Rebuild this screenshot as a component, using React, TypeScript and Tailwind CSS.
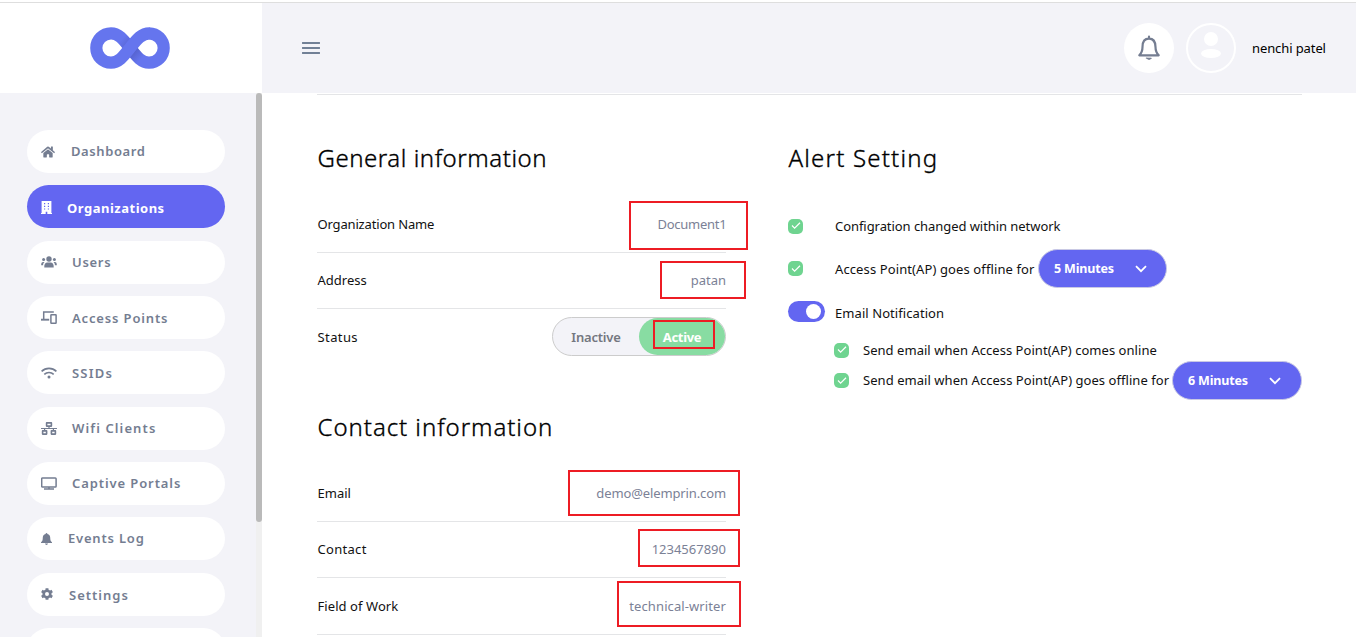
import React from "react";
import { FaHome, FaNetworkWired } from "react-icons/fa";

type IconType = React.ComponentType<{ className?: string }>;

function Monitor({ className }: { className?: string }) {
  return (
    <svg viewBox="0 0 16 13" fill="none" stroke="currentColor" strokeWidth="1.5" className={className}>
      <rect x="0.7" y="0.9" width="14.4" height="9.2" rx="0.8" />
      <path d="M3 12.1h10M8 10v2" />
    </svg>
  );
}

function Building({ className }: { className?: string }) {
  return (
    <svg viewBox="0 0 11 13" fill="currentColor" className={className}>
      <path fillRule="evenodd" d="M.6 0h9.800v12H11v1H6.300v-2.300H4.700V13H0v-1h.6zM3 2v1.200h1.200V2zM6.800 2v1.200H8V2zM3 4.700v1.200h1.200V4.700zM6.800 4.700v1.200H8V4.700zM3 7.400v1.200h1.200V7.400zM6.800 7.400v1.200H8V7.400z" />
    </svg>
  );
}

function People({ className }: { className?: string }) {
  return (
    <svg viewBox="0 0 16 12" fill="currentColor" className={className}>
      <circle cx="8" cy="3" r="2.700" />
      <circle cx="2.600" cy="3.600" r="1.500" />
      <circle cx="13.400" cy="3.600" r="1.500" />
      <path d="M3.300 11.500c-.3-3.100 1.200-4.900 3-4.900h3.400c1.800 0 3.300 1.800 3 4.900zM.2 9.300C0 7 .8 5.900 2.200 5.900h1.300C2.500 6.800 2 8 2.100 9.300zM15.800 9.300c.2-2.300-.6-3.400-2-3.400h-1.300c1 .9 1.500 2.100 1.400 3.400z" />
    </svg>
  );
}

function Devices({ className }: { className?: string }) {
  return (
    <svg viewBox="0 0 16 13" fill="none" stroke="currentColor" strokeWidth="1.500" className={className}>
      <path d="M12.800 1H2.700v7.400" />
      <path d="M0 8.700h8.200" strokeWidth="1.900" />
      <rect x="9.900" y="3.700" width="5.200" height="8.500" rx=".5" />
    </svg>
  );
}

function Wifi({ className }: { className?: string }) {
  return (
    <svg viewBox="0 0 16 12" fill="none" stroke="currentColor" strokeWidth="1.600" className={className}>
      <path d="M.6 4.400c4.200-4 10.600-4 14.800 0M3.300 7.300c2.700-2.500 6.700-2.500 9.400 0" />
      <circle cx="8" cy="10" r="1.500" fill="currentColor" stroke="none" />
    </svg>
  );
}

function SolidBell({ className }: { className?: string }) {
  return (
    <svg viewBox="0 0 11 12" fill="currentColor" className={className}>
      <path d="M5.500 0c.6 0 .9.400.9.900C8.300 1.300 9.200 2.800 9.200 4.600c0 2.900.6 3.900 1.800 4.700v.7H0v-.7c1.200-.8 1.800-1.800 1.800-4.700 0-1.800.9-3.300 2.800-3.700 0-.5.300-.9.900-.9zM4 10.600h3c-.2 1.700-2.800 1.700-3 0z" />
    </svg>
  );
}

function Gear({ className }: { className?: string }) {
  return (
    <svg viewBox="0 0 12 12" fill="none" stroke="currentColor" className={className}>
      <circle cx="6" cy="6" r="3.300" strokeWidth="2.600" />
      <path d="M6 .2v2.300M6 9.500v2.300M.8 3l2.200 1.250M9 7.750L11.200 9M.8 9L3 7.750M9 4.250L11.200 3" strokeWidth="2.900" />
    </svg>
  );
}

function Nav({ icon: Icon, label, box, text, active }: { icon: IconType; label: string; box: string; text: string; active?: boolean }) {
  return (
    <div className={`flex h-[43px] w-[198px] shrink-0 items-center rounded-full pl-[14px] ${active ? "bg-[#6366f1] font-bold text-white" : "bg-white font-semibold text-[#747d91]"}`}>
      <Icon className={`shrink-0 ${box}`} />
      <span className={`whitespace-nowrap text-[13px] leading-5 ${text}`}>{label}</span>
    </div>
  );
}

function Logo() {
  return (
    <svg viewBox="0 0 80 42" className="h-[42px] w-[80px]" fill="none" stroke="#6575ee" strokeWidth="12.200">
      <defs>
        <linearGradient id="upper" gradientUnits="userSpaceOnUse" x1="32" y1="12" x2="38" y2="17">
          <stop offset="0" stopColor="#6575ee" />
          <stop offset="1" stopColor="#5b69d8" />
        </linearGradient>
        <linearGradient id="lower" gradientUnits="userSpaceOnUse" x1="50" y1="33" x2="43" y2="26">
          <stop offset="0" stopColor="#6575ee" />
          <stop offset="1" stopColor="#5663cf" />
        </linearGradient>
      </defs>
      <path d="M40 21C34 13.500 29 6.300 21 6.300" stroke="url(#upper)" />
      <path d="M40 21C46 28.500 51 35.700 59 35.700" stroke="url(#lower)" />
      <path d="M59 6.300A14.700 14.700 0 0 1 59 35.700M21 6.300A14.700 14.700 0 0 0 21 35.700C29 35.700 34 28.500 40 21C46 13.500 51 6.300 59.500 6.300" />
    </svg>
  );
}

function Heading({ children, className }: { children: string; className: string }) {
  return <h2 className={`pl-[0.5px] text-[24px] leading-[36px] font-light whitespace-nowrap text-black [-webkit-text-stroke:0.35px_black] ${className}`}>{children}</h2>;
}

function Row({ label, labelTrack, value, valueTrack, box, h }: { label: string; labelTrack: string; value: string; valueTrack: string; box: string; h: string }) {
  return (
    <div className={`relative flex items-center justify-between border-b border-[#e4e5e7] pl-[0.5px] text-[13px] ${h}`}>
      <span className={`text-[#111] ${labelTrack}`}>{label}</span>
      <span className={`text-[#7b8196] ${valueTrack}`}>{value}</span>
      <div className={`absolute border-2 border-[#ed1c24] ${box}`} />
    </div>
  );
}

function Check() {
  return (
    <span className="relative -top-px flex size-[15px] shrink-0 items-center justify-center rounded-[5px] bg-[#6fd490]">
      <svg viewBox="0 0 10 8" className="h-[8px] w-[10px]" fill="none" stroke="white" strokeWidth="1.200"><path d="M1 3.500l2.600 2.600L9 .8" /></svg>
    </span>
  );
}

function Select({ label, w }: { label: string; w: string }) {
  return (
    <div className={`relative -top-px flex h-[39px] shrink-0 items-center rounded-full border border-[#c9c9e4] bg-[#6366f1] pl-[15px] font-bold text-white ${w}`}>
      <span className="w-[81px] pt-px text-[12.500px] tracking-[-0.15px] whitespace-nowrap">{label}</span>
      <svg viewBox="0 0 12 8" className="h-[8px] w-[12px]" fill="none" stroke="white" strokeWidth="1.800"><path d="M1 1.200l5 5 5-5" /></svg>
    </div>
  );
}

export default function App() {
  return (
    <div className="flex h-[637px] w-[1356px] flex-col overflow-hidden bg-white font-['Noto_Sans','Open_Sans',sans-serif]">
      <div className="h-[3px] shrink-0 border-b border-[#dedede] bg-white" />
      <header className="flex h-[90px] shrink-0">
        <div className="flex w-[262px] shrink-0 justify-center pt-[24px] pr-[3px]"><Logo /></div>
        <div className="flex flex-1 items-center bg-[#f3f3f8] pl-10">
          <svg viewBox="0 0 18 12" className="h-[12px] w-[18px]" stroke="#718096" strokeWidth="1.900" strokeLinecap="round"><path d="M.5 1h17M.5 6h17M.5 11h17" /></svg>
          <div className="ml-[804px] flex size-[50px] items-center justify-center rounded-full bg-white">
            <svg viewBox="0 0 24 26" className="h-[26px] w-[24px]" fill="none" stroke="#747d91" strokeWidth="2.200" strokeLinejoin="round" strokeLinecap="round">
              <path d="M2.300 20.300h19.400c-2.300-2.300-3.200-4-3.200-8.300 0-5-2.300-8.300-6.500-8.300S5.500 7 5.500 12c0 4.300-.9 6-3.200 8.300zM12 1.700v2" /><path d="M9.700 23.200h4.600c-.4 1.500-4.200 1.500-4.600 0z" fill="#747d91" strokeWidth="1" />
            </svg>
          </div>
          <div className="ml-3 flex size-[50px] flex-col items-center rounded-full border-2 border-white pt-[7px]">
            <div className="size-[14px] rounded-full bg-white" />
            <div className="mt-[3px] h-[9px] w-[20px] rounded-[50%] bg-white" />
          </div>
          <span className="ml-[16px] pt-[2px] text-[13px] tracking-[-0.1px] whitespace-nowrap text-black">nenchi patel</span>
        </div>
      </header>
      <div className="flex min-h-0 flex-1">
        <aside className="flex w-[262px] shrink-0 bg-[#f3f3f8]">
          <nav className="flex w-[256px] flex-col gap-[12.350px] pt-[37px] pl-[27px]">
            <Nav icon={FaHome} label="Dashboard" box="size-[14px]" text="ml-[16px] pb-px tracking-[0.600px]" />
            <Nav icon={Building} label="Organizations" box="mt-px h-[13px] w-[11px]" text="ml-[15px] pt-[2px] tracking-[0.5px]" active />
            <Nav icon={People} label="Users" box="h-[12px] w-[16px]" text="ml-[15px] tracking-[0.700px]" />
            <Nav icon={Devices} label="Access Points" box="h-[13px] w-[16px]" text="ml-[15px] tracking-[0.85px]" />
            <Nav icon={Wifi} label="SSIDs" box="h-[12px] w-[16px]" text="ml-[15px] pt-px tracking-[1.2px]" />
            <Nav icon={FaNetworkWired} label="Wifi Clients" box="h-[13px] w-[16px]" text="ml-[15px] tracking-[1.1px]" />
            <Nav icon={Monitor} label="Captive Portals" box="h-[13px] w-[16px]" text="ml-[15px] pb-px tracking-[0.9px]" />
            <Nav icon={SolidBell} label="Events Log" box="h-[12px] w-[11px]" text="ml-[16px] pb-px tracking-[0.8px]" />
            <Nav icon={Gear} label="Settings" box="size-[12px]" text="ml-[16px] pt-px tracking-[1px]" />
            <Nav icon={Gear} label="" box="size-[12px]" text="ml-[16px]" />
          </nav>
          <div className="w-[6px] bg-[#f0f0f0]"><div className="h-[429px] w-[6px] rounded-full bg-[#bababa]" /></div>
        </aside>
        <main className="flex-1 pt-px pl-[55px]">
          <div className="w-[985px] border-t border-[#e4e5e7]" />
          <div className="flex">
            <section className="w-[409px]">
              <Heading className="mt-[45px] tracking-[0.540px]">General information</Heading>
              <div className="mt-[21px]">
                <Row label="Organization Name" labelTrack="tracking-[-0.16px]" value="Document1" valueTrack="-mr-[0.5px] tracking-[-0.25px]" h="h-[56px]" box="top-[4px] right-[-22px] h-[49px] w-[119px]" />
                <Row label="Address" labelTrack="" value="patan" valueTrack="" h="h-[56px]" box="top-[8px] right-[-20px] h-[38px] w-[86px]" />
                <div className="flex h-[56px] items-center justify-between pl-[0.5px] text-[13px]">
                  <span className="pt-px tracking-[0.4px] text-[#111]">Status</span>
                  <div className="relative -top-px flex h-[39px] w-[174px] rounded-full border border-[#ccc] bg-[#f3f3f8]">
                    <span className="flex w-[86px] items-center justify-center pt-[3px] font-semibold tracking-[-0.200px] text-[#747780]">Inactive</span>
                    <span className="relative flex flex-1 items-center justify-center rounded-full bg-[#88dca2] pt-[3px] font-bold tracking-[-0.300px] text-white">Active<i className="absolute top-[2px] left-[14px] h-[29px] w-[62px] border-2 border-[#ed1c24]" /></span>
                  </div>
                </div>
              </div>
              <Heading className="mt-[44px] tracking-[0.950px]">Contact information</Heading>
              <div className="mt-[21px]">
                <Row label="Email" labelTrack="" value="demo@elemprin.com" valueTrack="tracking-[-0.12px]" h="h-[56px]" box="top-[4px] right-[-14px] h-[46px] w-[172px]" />
                <Row label="Contact" labelTrack="tracking-[0.3px]" value="1234567890" valueTrack="" h="h-[56px]" box="top-[7px] right-[-14px] h-[38px] w-[102px]" />
                <Row label="Field of Work" labelTrack="pt-px tracking-[0.07px]" value="technical-writer" valueTrack="pt-px tracking-[0.1px]" h="h-[57px]" box="top-[3px] right-[-15px] h-[46px] w-[124px]" />
              </div>
            </section>
            <section className="ml-[62px] text-[13px] text-[#111]">
              <Heading className="mt-[45px] tracking-[1.200px]">Alert Setting</Heading>
              <div className="mt-[41px] flex h-[20px] items-center"><Check /><span className="ml-[32px] tracking-[-0.06px] whitespace-nowrap">Configration changed within network</span></div>
              <div className="mt-[12px] flex h-[41px] items-center"><Check /><span className="mr-[3px] ml-[32px] w-[200px] tracking-[0.11px] whitespace-nowrap">Access Point(AP) goes offline for</span><Select label="5 Minutes" w="w-[129px]" /></div>
              <div className="mt-[13px] flex h-[21px] items-center">
                <span className="relative -top-[2px] flex h-[21px] w-[37px] shrink-0 items-center justify-end rounded-full bg-[#6366f1] pr-[4px]"><span className="size-[15px] rounded-full bg-white" /></span>
                <span className="ml-[10px] tracking-[0.07px] whitespace-nowrap">Email Notification</span>
              </div>
              <div className="mt-[17px] flex h-[20px] items-center pl-[46px]"><Check /><span className="ml-[14px] tracking-[0.04px] whitespace-nowrap">Send email when Access Point(AP) comes online</span></div>
              <div className="flex h-[41px] items-center pl-[46px]"><Check /><span className="mr-[2px] ml-[14px] w-[307px] pb-px tracking-[0.05px] whitespace-nowrap">Send email when Access Point(AP) goes offline for</span><Select label="6 Minutes" w="w-[130px]" /></div>
            </section>
          </div>
        </main>
      </div>
    </div>
  );
}
